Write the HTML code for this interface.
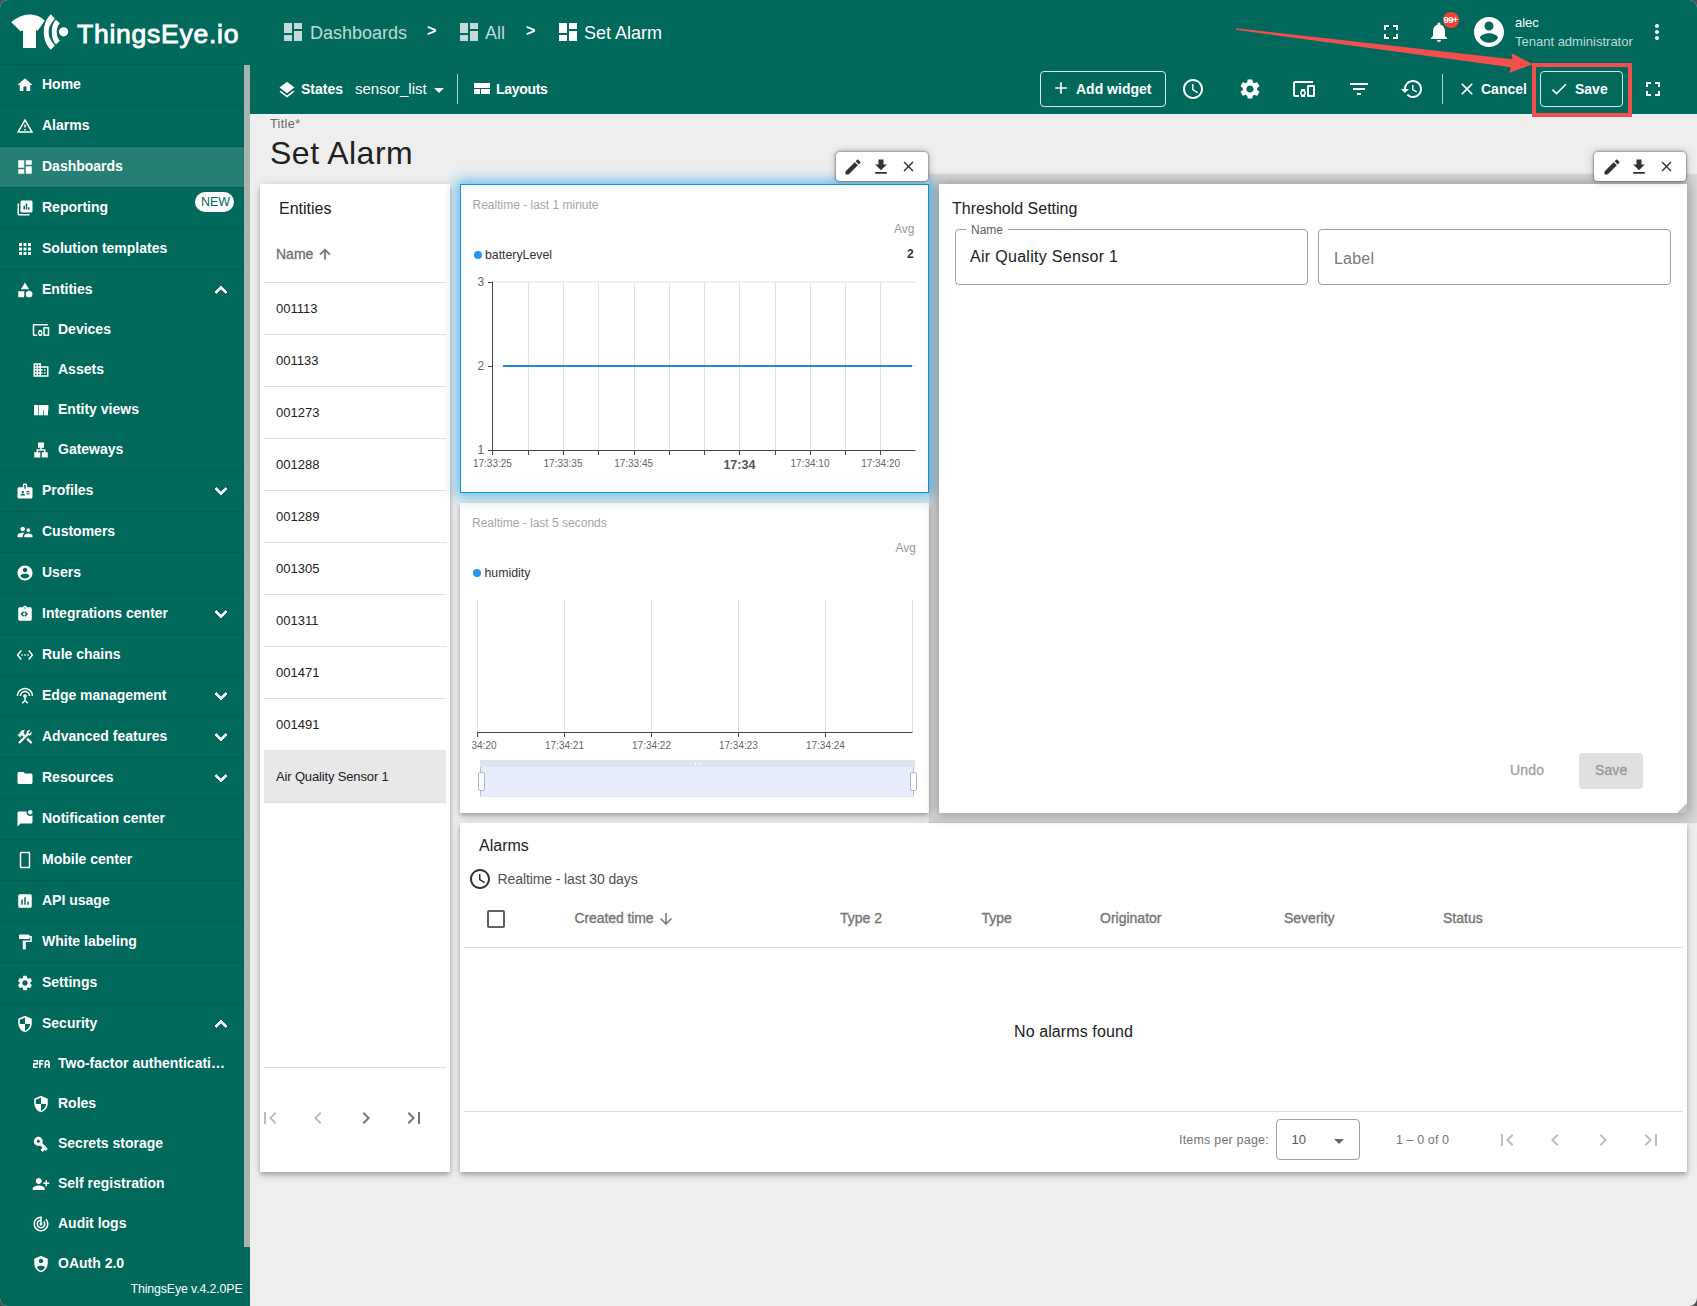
<!DOCTYPE html>
<html><head><meta charset="utf-8">
<style>
*{box-sizing:border-box;margin:0;padding:0}
html,body{width:1697px;height:1306px;overflow:hidden;background:#4d5055;font-family:"Liberation Sans",sans-serif}
#app{position:absolute;left:0;top:0;width:1697px;height:1306px;border-radius:8px;overflow:hidden;background:#eeeeee}
.abs{position:absolute}
.t{white-space:nowrap}

</style></head><body>
<div id="app">
<div class="abs" style="left:0;top:0;width:1697px;height:114px;background:#00695c"></div><div class="abs" style="left:0;top:64px;width:244px;height:1242px;background:#00695c"></div><div class="abs" style="left:244px;top:64px;width:6px;height:1242px;background:#00695c"></div><div class="abs" style="left:244px;top:65px;width:6px;height:1182px;background:#a6b5b2"></div><svg class="abs" style="left:0;top:0" width="80" height="64" viewBox="0 0 80 64">
<path fill="#fff" d="M11.2 22.2 C18 16 26 14.5 29.5 14.5 C34 14.5 40 16 44.8 20.5 L37.8 30.8 L36 30 L36 48 L23 48 L23 30.5 L20.5 31.2 Z"/>
<path fill="#fff" d="M50.8 14.3 L54.9 18.7 C50 24 48.7 28 48.7 32 C48.7 36 50 40 54.9 45.5 L50.8 49.8 C45 44 43.8 37 43.8 32 C43.8 27 45 20 50.8 14.3 Z"/>
<path fill="#fff" d="M56 19.8 L59.8 23.3 C57.5 26 56.7 29 56.7 32 C56.7 35 57.5 38 59.8 40.8 L56 44.5 C52.7 41 51.8 36 51.8 32 C51.8 28 52.7 23 56 19.8 Z"/>
<circle cx="63.6" cy="31.8" r="4.6" fill="#fff"/>
</svg><div class="abs t" style="left:77px;top:20.57px;font-size:26.5px;line-height:26.5px;color:#fff;font-weight:normal;letter-spacing:0.75px;-webkit-text-stroke:0.9px #fff">ThingsEye.io</div><svg class="abs" style="left:281px;top:20px;" width="24" height="24" viewBox="0 0 24 24"><path fill="rgba(255,255,255,0.76)" d="M3 13h8V3H3v10zm0 8h8v-6H3v6zm10 0h8V11h-8v10zm0-18v6h8V3h-8z"/></svg><div class="abs t" style="left:310px;top:23.76px;font-size:18px;line-height:18px;color:rgba(255,255,255,0.76);font-weight:normal;">Dashboards</div><div class="abs t" style="left:427px;top:23.46px;font-size:16px;line-height:16px;color:#fff;font-weight:bold;">&gt;</div><svg class="abs" style="left:457px;top:20px;" width="24" height="24" viewBox="0 0 24 24"><path fill="rgba(255,255,255,0.76)" d="M3 13h8V3H3v10zm0 8h8v-6H3v6zm10 0h8V11h-8v10zm0-18v6h8V3h-8z"/></svg><div class="abs t" style="left:485px;top:23.76px;font-size:18px;line-height:18px;color:rgba(255,255,255,0.76);font-weight:normal;">All</div><div class="abs t" style="left:526px;top:23.46px;font-size:16px;line-height:16px;color:#fff;font-weight:bold;">&gt;</div><svg class="abs" style="left:556px;top:20px;" width="24" height="24" viewBox="0 0 24 24"><path fill="#fff" d="M3 13h8V3H3v10zm0 8h8v-6H3v6zm10 0h8V11h-8v10zm0-18v6h8V3h-8z"/></svg><div class="abs t" style="left:584px;top:23.76px;font-size:18px;line-height:18px;color:#fff;font-weight:normal;">Set Alarm</div><svg class="abs" style="left:1379px;top:20px;" width="24" height="24" viewBox="0 0 24 24"><path fill="#fff" d="M7 14H5v5h5v-2H7v-3zm-2-4h2V7h3V5H5v5zm12 7h-3v2h5v-5h-2v3zM14 5v2h3v3h2V5h-5z"/></svg><svg class="abs" style="left:1427px;top:20px;" width="24" height="24" viewBox="0 0 24 24"><path fill="#fff" d="M12 22c1.1 0 2-.9 2-2h-4c0 1.1.89 2 2 2zm6-6v-5c0-3.07-1.64-5.64-4.5-6.32V4c0-.83-.67-1.5-1.5-1.5s-1.5.67-1.5 1.5v.68C7.63 5.36 6 7.92 6 11v5l-2 2v1h16v-1l-2-2z"/></svg><div class="abs" style="left:1443px;top:12px;width:16px;height:16px;border-radius:50%;background:#f44336"></div><div class="abs t" style="left:1443.5px;top:15.46px;font-size:9.5px;line-height:9.5px;color:#fff;font-weight:bold;letter-spacing:-0.6px">99+</div><svg class="abs" style="left:1471px;top:14px;" width="36" height="36" viewBox="0 0 24 24"><path fill="#fff" d="M12 2C6.48 2 2 6.48 2 12s4.48 10 10 10 10-4.48 10-10S17.52 2 12 2zm0 3c1.66 0 3 1.34 3 3s-1.34 3-3 3-3-1.34-3-3 1.34-3 3-3zm0 14.2c-2.5 0-4.71-1.28-6-3.22.03-1.99 4-3.08 6-3.08 1.99 0 5.97 1.09 6 3.08-1.29 1.94-3.5 3.22-6 3.22z"/></svg><div class="abs t" style="left:1515px;top:16.20px;font-size:13px;line-height:13px;color:#fff;font-weight:normal;">alec</div><div class="abs t" style="left:1515px;top:35.30px;font-size:13px;line-height:13px;color:rgba(255,255,255,0.76);font-weight:normal;">Tenant administrator</div><svg class="abs" style="left:1645px;top:20px;" width="24" height="24" viewBox="0 0 24 24"><path fill="#fff" d="M12 8c1.1 0 2-.9 2-2s-.9-2-2-2-2 .9-2 2 .9 2 2 2zm0 2c-1.1 0-2 .9-2 2s.9 2 2 2 2-.9 2-2-.9-2-2-2zm0 6c-1.1 0-2 .9-2 2s.9 2 2 2 2-.9 2-2-.9-2-2-2z"/></svg><div class="abs" style="left:0;top:64px;width:244px;height:1px;background:#005d51"></div><svg class="abs" style="left:16px;top:76px;" width="18" height="18" viewBox="0 0 24 24"><path fill="#fff" d="M10 20v-6h4v6h5v-8h3L12 3 2 12h3v8z"/></svg><div class="abs t" style="left:42px;top:77.15px;font-size:14px;line-height:14px;color:#fff;font-weight:bold;">Home</div><div class="abs" style="left:0;top:105px;width:244px;height:1px;background:#005d51"></div><svg class="abs" style="left:16px;top:117px;" width="18" height="18" viewBox="0 0 24 24"><path fill="#fff" d="M12 5.99L19.53 19H4.47L12 5.99M12 2L1 21h22L12 2zm1 14h-2v2h2v-2zm0-6h-2v4h2v-4z"/></svg><div class="abs t" style="left:42px;top:118.15px;font-size:14px;line-height:14px;color:#fff;font-weight:bold;">Alarms</div><div class="abs" style="left:0;top:146px;width:244px;height:1px;background:#005d51"></div><div class="abs" style="left:0;top:147px;width:244px;height:40px;background:rgba(255,255,255,0.15)"></div><svg class="abs" style="left:16px;top:158px;" width="18" height="18" viewBox="0 0 24 24"><path fill="#fff" d="M3 13h8V3H3v10zm0 8h8v-6H3v6zm10 0h8V11h-8v10zm0-18v6h8V3h-8z"/></svg><div class="abs t" style="left:42px;top:159.15px;font-size:14px;line-height:14px;color:#fff;font-weight:bold;">Dashboards</div><div class="abs" style="left:0;top:187px;width:244px;height:1px;background:#005d51"></div><svg class="abs" style="left:16px;top:199px;" width="18" height="18" viewBox="0 0 24 24"><path fill="#fff" d="M4 6H2v14c0 1.1.9 2 2 2h14v-2H4V6zm16-4H8c-1.1 0-2 .9-2 2v12c0 1.1.9 2 2 2h12c1.1 0 2-.9 2-2V4c0-1.1-.9-2-2-2zm-8 12h-2V9h2v5zm3 0h-2V6h2v8zm3 0h-2v-3h2v3z"/></svg><div class="abs t" style="left:42px;top:200.15px;font-size:14px;line-height:14px;color:#fff;font-weight:bold;">Reporting</div><div class="abs" style="left:195px;top:192px;width:39px;height:20px;border-radius:10px;background:#fff"></div><div class="abs" style="left:0;top:228px;width:244px;height:1px;background:#005d51"></div><svg class="abs" style="left:16px;top:240px;" width="18" height="18" viewBox="0 0 24 24"><path fill="#fff" d="M4 8h4V4H4v4zm6 12h4v-4h-4v4zm-6 0h4v-4H4v4zm0-6h4v-4H4v4zm6 0h4v-4h-4v4zm6-10v4h4V4h-4zm-6 4h4V4h-4v4zm6 6h4v-4h-4v4zm0 6h4v-4h-4v4z"/></svg><div class="abs t" style="left:42px;top:241.15px;font-size:14px;line-height:14px;color:#fff;font-weight:bold;">Solution templates</div><div class="abs" style="left:0;top:269px;width:244px;height:1px;background:#005d51"></div><svg class="abs" style="left:16px;top:281px;" width="18" height="18" viewBox="0 0 24 24"><path fill="#fff" d="M12 2l-5.5 9h11L12 2zm5.5 11c-2.49 0-4.5 2.01-4.5 4.5s2.01 4.5 4.5 4.5 4.5-2.01 4.5-4.5-2.01-4.5-4.5-4.5zM3 21.5h8v-8H3v8z"/></svg><div class="abs t" style="left:42px;top:282.15px;font-size:14px;line-height:14px;color:#fff;font-weight:bold;">Entities</div><svg class="abs" style="left:209px;top:278px;" width="24" height="24" viewBox="0 0 24 24"><path stroke="#fff" stroke-width="0.9" fill="#fff" d="M12 8l-6 6 1.41 1.41L12 10.83l4.59 4.58L18 14z"/></svg><svg class="abs" style="left:32px;top:321px;" width="18" height="18" viewBox="0 0 24 24"><path fill="#fff" d="M3 6h18V4H3c-1.1 0-2 .9-2 2v12c0 1.1.9 2 2 2h4v-2H3V6zm10 6H9v1.78c-.61.55-1 1.33-1 2.22s.39 1.67 1 2.22V20h4v-1.78c.61-.55 1-1.34 1-2.22s-.39-1.67-1-2.22V12zm-2 5.5c-.83 0-1.5-.67-1.5-1.5s.67-1.5 1.5-1.5 1.5.67 1.5 1.5-.67 1.5-1.5 1.5zM22 8h-6c-.5 0-1 .5-1 1v10c0 .5.5 1 1 1h6c.5 0 1-.5 1-1V9c0-.5-.5-1-1-1zm-1 10h-4v-8h4v8z"/></svg><div class="abs t" style="left:58px;top:322.15px;font-size:14px;line-height:14px;color:#fff;font-weight:bold;">Devices</div><svg class="abs" style="left:32px;top:361px;" width="18" height="18" viewBox="0 0 24 24"><path fill="#fff" d="M12 7V3H2v18h20V7H12zM6 19H4v-2h2v2zm0-4H4v-2h2v2zm0-4H4V9h2v2zm0-4H4V5h2v2zm4 12H8v-2h2v2zm0-4H8v-2h2v2zm0-4H8V9h2v2zm0-4H8V5h2v2zm10 12h-8v-2h2v-2h-2v-2h2v-2h-2V9h8v10zm-2-8h-2v2h2v-2zm0 4h-2v2h2v-2z"/></svg><div class="abs t" style="left:58px;top:362.15px;font-size:14px;line-height:14px;color:#fff;font-weight:bold;">Assets</div><svg class="abs" style="left:34px;top:405px" width="15" height="11" viewBox="0 0 15 11"><g fill="#fff"><rect x="0" y="0" width="4.2" height="10.3"/><rect x="4.8" y="0" width="9.6" height="5.3"/><rect x="4.8" y="5" width="4.4" height="5.3"/><rect x="9.8" y="5" width="4.2" height="5.3"/></g></svg><div class="abs t" style="left:58px;top:402.15px;font-size:14px;line-height:14px;color:#fff;font-weight:bold;">Entity views</div><svg class="abs" style="left:32px;top:441px;" width="18" height="18" viewBox="0 0 24 24"><path fill="#fff" d="M13 22h8v-7h-3v-4h-5V9h3V2H8v7h3v2H6v4H3v7h8v-7H8v-2h8v2h-3z"/></svg><div class="abs t" style="left:58px;top:442.15px;font-size:14px;line-height:14px;color:#fff;font-weight:bold;">Gateways</div><div class="abs" style="left:0;top:470px;width:244px;height:1px;background:#005d51"></div><svg class="abs" style="left:16px;top:482px;" width="18" height="18" viewBox="0 0 24 24"><path fill="#fff" d="M20 7h-5V4c0-1.1-.9-2-2-2h-2c-1.1 0-2 .9-2 2v3H4c-1.1 0-2 .9-2 2v11c0 1.1.9 2 2 2h16c1.1 0 2-.9 2-2V9c0-1.1-.9-2-2-2zM9 12c.83 0 1.5.67 1.5 1.5S9.83 15 9 15s-1.5-.67-1.5-1.5S8.17 12 9 12zm3 6H6v-.75c0-1 2-1.5 3-1.5s3 .5 3 1.5V18zm1-9h-2V4h2v5zm5 7.5h-4V15h4v1.5zm0-3h-4V12h4v1.5z"/></svg><div class="abs t" style="left:42px;top:483.15px;font-size:14px;line-height:14px;color:#fff;font-weight:bold;">Profiles</div><svg class="abs" style="left:209px;top:479px;" width="24" height="24" viewBox="0 0 24 24"><path stroke="#fff" stroke-width="0.9" fill="#fff" d="M16.59 8.59L12 13.17 7.41 8.59 6 10l6 6 6-6z"/></svg><div class="abs" style="left:0;top:511px;width:244px;height:1px;background:#005d51"></div><svg class="abs" style="left:16px;top:523px;" width="18" height="18" viewBox="0 0 24 24"><path fill="#fff" d="M16.5 12c1.38 0 2.49-1.12 2.49-2.5S17.88 7 16.5 7C15.12 7 14 8.12 14 9.5s1.12 2.5 2.5 2.5zM9 11c1.66 0 2.99-1.34 2.99-3S10.66 5 9 5C7.34 5 6 6.34 6 8s1.34 3 3 3zm7.5 3c-1.83 0-5.5.92-5.5 2.75V19h11v-2.25c0-1.83-3.67-2.75-5.5-2.75zM9 13c-2.33 0-7 1.17-7 3.5V19h7v-2.25c0-.85.33-2.34 2.37-3.47C10.5 13.1 9.66 13 9 13z"/></svg><div class="abs t" style="left:42px;top:524.15px;font-size:14px;line-height:14px;color:#fff;font-weight:bold;">Customers</div><div class="abs" style="left:0;top:552px;width:244px;height:1px;background:#005d51"></div><svg class="abs" style="left:16px;top:564px;" width="18" height="18" viewBox="0 0 24 24"><path fill="#fff" d="M12 2C6.48 2 2 6.48 2 12s4.48 10 10 10 10-4.48 10-10S17.52 2 12 2zm0 3c1.66 0 3 1.34 3 3s-1.34 3-3 3-3-1.34-3-3 1.34-3 3-3zm0 14.2c-2.5 0-4.71-1.28-6-3.22.03-1.99 4-3.08 6-3.08 1.99 0 5.97 1.09 6 3.08-1.29 1.94-3.5 3.22-6 3.22z"/></svg><div class="abs t" style="left:42px;top:565.15px;font-size:14px;line-height:14px;color:#fff;font-weight:bold;">Users</div><div class="abs" style="left:0;top:593px;width:244px;height:1px;background:#005d51"></div><svg class="abs" style="left:16px;top:605px;" width="18" height="18" viewBox="0 0 24 24"><path fill="#fff" d="M19 3h-4.18C14.4 1.84 13.3 1 12 1c-1.3 0-2.4.84-2.82 2H5c-1.1 0-2 .9-2 2v14c0 1.1.9 2 2 2h14c1.1 0 2-.9 2-2V5c0-1.1-.9-2-2-2zm-7 0c.55 0 1 .45 1 1s-.45 1-1 1-1-.45-1-1 .45-1 1-1zM11 14.17l-1.41 1.42L6 12l3.59-3.59L11 9.83 8.83 12 11 14.17zm1.41 1.42L11 14.17 13.17 12 11 9.83l1.41-1.42L16 12l-3.59 3.59z"/></svg><div class="abs t" style="left:42px;top:606.15px;font-size:14px;line-height:14px;color:#fff;font-weight:bold;">Integrations center</div><svg class="abs" style="left:209px;top:602px;" width="24" height="24" viewBox="0 0 24 24"><path stroke="#fff" stroke-width="0.9" fill="#fff" d="M16.59 8.59L12 13.17 7.41 8.59 6 10l6 6 6-6z"/></svg><div class="abs" style="left:0;top:634px;width:244px;height:1px;background:#005d51"></div><svg class="abs" style="left:16px;top:646px;" width="18" height="18" viewBox="0 0 24 24"><path fill="#fff" d="M7.77 6.76L6.23 5.48.82 12l5.41 6.52 1.54-1.28L3.42 12l4.35-5.24zM7 13h2v-2H7v2zm10-2h-2v2h2v-2zm-6 2h2v-2h-2v2zm6.77-7.52l-1.54 1.28L20.58 12l-4.35 5.24 1.54 1.28L23.18 12l-5.41-6.52z"/></svg><div class="abs t" style="left:42px;top:647.15px;font-size:14px;line-height:14px;color:#fff;font-weight:bold;">Rule chains</div><div class="abs" style="left:0;top:675px;width:244px;height:1px;background:#005d51"></div><svg class="abs" style="left:16px;top:687px;" width="18" height="18" viewBox="0 0 24 24"><path fill="#fff" d="M12 5c-3.87 0-7 3.13-7 7h2c0-2.76 2.24-5 5-5s5 2.24 5 5h2c0-3.87-3.13-7-7-7zm1 9.29c.88-.39 1.5-1.26 1.5-2.29 0-1.38-1.12-2.5-2.5-2.5S9.5 10.62 9.5 12c0 1.02.62 1.9 1.5 2.29v3.3L7.59 21 9 22.41l3-3 3 3L16.41 21 13 17.59v-3.3zM12 1C5.93 1 1 5.93 1 12h2c0-4.97 4.03-9 9-9s9 4.03 9 9h2c0-6.07-4.93-11-11-11z"/></svg><div class="abs t" style="left:42px;top:688.15px;font-size:14px;line-height:14px;color:#fff;font-weight:bold;">Edge management</div><svg class="abs" style="left:209px;top:684px;" width="24" height="24" viewBox="0 0 24 24"><path stroke="#fff" stroke-width="0.9" fill="#fff" d="M16.59 8.59L12 13.17 7.41 8.59 6 10l6 6 6-6z"/></svg><div class="abs" style="left:0;top:716px;width:244px;height:1px;background:#005d51"></div><svg class="abs" style="left:16px;top:728px;" width="18" height="18" viewBox="0 0 24 24"><path fill="#fff" d="M13.78 15.3l6 6 2.11-2.16-6-6zM17.5 10c1.93 0 3.5-1.57 3.5-3.5 0-.58-.16-1.12-.41-1.6l-2.7 2.7-1.49-1.49 2.7-2.7c-.48-.25-1.02-.41-1.6-.41C15.57 3 14 4.57 14 6.5c0 .41.08.8.21 1.16l-1.85 1.85-1.78-1.78.71-.71-1.41-1.41L12 3.49c-1.17-1.17-3.07-1.17-4.24 0L4.22 7.03l1.41 1.41H2.81l-.71.71 3.54 3.54.71-.71V9.15l1.41 1.41.71-.71 1.78 1.78-7.41 7.41 2.12 2.12L16.34 9.79c.36.13.75.21 1.16.21z"/></svg><div class="abs t" style="left:42px;top:729.15px;font-size:14px;line-height:14px;color:#fff;font-weight:bold;">Advanced features</div><svg class="abs" style="left:209px;top:725px;" width="24" height="24" viewBox="0 0 24 24"><path stroke="#fff" stroke-width="0.9" fill="#fff" d="M16.59 8.59L12 13.17 7.41 8.59 6 10l6 6 6-6z"/></svg><div class="abs" style="left:0;top:757px;width:244px;height:1px;background:#005d51"></div><svg class="abs" style="left:16px;top:769px;" width="18" height="18" viewBox="0 0 24 24"><path fill="#fff" d="M10 4H4c-1.1 0-1.99.9-1.99 2L2 18c0 1.1.9 2 2 2h16c1.1 0 2-.9 2-2V8c0-1.1-.9-2-2-2h-8l-2-2z"/></svg><div class="abs t" style="left:42px;top:770.15px;font-size:14px;line-height:14px;color:#fff;font-weight:bold;">Resources</div><svg class="abs" style="left:209px;top:766px;" width="24" height="24" viewBox="0 0 24 24"><path stroke="#fff" stroke-width="0.9" fill="#fff" d="M16.59 8.59L12 13.17 7.41 8.59 6 10l6 6 6-6z"/></svg><div class="abs" style="left:0;top:798px;width:244px;height:1px;background:#005d51"></div><svg class="abs" style="left:16px;top:810px;" width="18" height="18" viewBox="0 0 24 24"><path fill="#fff" d="M22 6.98V16c0 1.1-.9 2-2 2H6l-4 4V4c0-1.1.9-2 2-2h10.1c-.06.32-.1.66-.1 1 0 2.76 2.24 5 5 5 1.13 0 2.16-.39 3-1.02zM16 3c0 1.66 1.34 3 3 3s3-1.34 3-3-1.34-3-3-3-3 1.34-3 3z"/></svg><div class="abs t" style="left:42px;top:811.15px;font-size:14px;line-height:14px;color:#fff;font-weight:bold;">Notification center</div><div class="abs" style="left:0;top:839px;width:244px;height:1px;background:#005d51"></div><svg class="abs" style="left:16px;top:851px;" width="18" height="18" viewBox="0 0 24 24"><path fill="#fff" d="M17 1.01L7 1c-1.1 0-2 .9-2 2v18c0 1.1.9 2 2 2h10c1.1 0 2-.9 2-2V3c0-1.1-.9-1.99-2-1.99zM17 21H7V3h10v18z"/></svg><div class="abs t" style="left:42px;top:852.15px;font-size:14px;line-height:14px;color:#fff;font-weight:bold;">Mobile center</div><div class="abs" style="left:0;top:880px;width:244px;height:1px;background:#005d51"></div><svg class="abs" style="left:16px;top:892px;" width="18" height="18" viewBox="0 0 24 24"><path fill="#fff" d="M19 3H5c-1.1 0-2 .9-2 2v14c0 1.1.9 2 2 2h14c1.1 0 2-.9 2-2V5c0-1.1-.9-2-2-2zM9 17H7v-7h2v7zm4 0h-2V7h2v10zm4 0h-2v-4h2v4z"/></svg><div class="abs t" style="left:42px;top:893.15px;font-size:14px;line-height:14px;color:#fff;font-weight:bold;">API usage</div><div class="abs" style="left:0;top:921px;width:244px;height:1px;background:#005d51"></div><svg class="abs" style="left:16px;top:933px;" width="18" height="18" viewBox="0 0 24 24"><path fill="#fff" d="M18 4V3c0-.55-.45-1-1-1H5c-.55 0-1 .45-1 1v4c0 .55.45 1 1 1h12c.55 0 1-.45 1-1V6h1v4H9v11c0 .55.45 1 1 1h2c.55 0 1-.45 1-1v-9h8V4h-3z"/></svg><div class="abs t" style="left:42px;top:934.15px;font-size:14px;line-height:14px;color:#fff;font-weight:bold;">White labeling</div><div class="abs" style="left:0;top:962px;width:244px;height:1px;background:#005d51"></div><svg class="abs" style="left:16px;top:974px;" width="18" height="18" viewBox="0 0 24 24"><path fill="#fff" d="M19.14 12.94c.04-.3.06-.61.06-.94 0-.32-.02-.64-.07-.94l2.03-1.58c.18-.14.23-.41.12-.61l-1.92-3.32c-.12-.22-.37-.29-.59-.22l-2.39.96c-.5-.38-1.03-.7-1.62-.94l-.36-2.54c-.04-.24-.24-.41-.48-.41h-3.84c-.24 0-.43.17-.47.41l-.36 2.54c-.59.24-1.13.57-1.62.94l-2.39-.96c-.22-.08-.47 0-.59.22L2.74 8.87c-.12.21-.08.47.12.61l2.03 1.58c-.05.3-.09.63-.09.94s.02.64.07.94l-2.03 1.58c-.18.14-.23.41-.12.61l1.92 3.32c.12.22.37.29.59.22l2.39-.96c.5.38 1.03.7 1.62.94l.36 2.54c.05.24.24.41.48.41h3.84c.24 0 .44-.17.47-.41l.36-2.54c.59-.24 1.13-.56 1.62-.94l2.39.96c.22.08.47 0 .59-.22l1.92-3.32c.12-.22.07-.47-.12-.61l-2.01-1.58zM12 15.6c-1.98 0-3.6-1.62-3.6-3.6s1.62-3.6 3.6-3.6 3.6 1.62 3.6 3.6-1.62 3.6-3.6 3.6z"/></svg><div class="abs t" style="left:42px;top:975.15px;font-size:14px;line-height:14px;color:#fff;font-weight:bold;">Settings</div><div class="abs" style="left:0;top:1003px;width:244px;height:1px;background:#005d51"></div><svg class="abs" style="left:16px;top:1015px;" width="18" height="18" viewBox="0 0 24 24"><path fill="#fff" d="M12 1L3 5v6c0 5.55 3.84 10.74 9 12 5.16-1.26 9-6.45 9-12V5l-9-4zm0 10.99h7c-.53 4.12-3.28 7.79-7 8.94V12H5V6.3l7-3.11v8.8z"/></svg><div class="abs t" style="left:42px;top:1016.15px;font-size:14px;line-height:14px;color:#fff;font-weight:bold;">Security</div><svg class="abs" style="left:209px;top:1012px;" width="24" height="24" viewBox="0 0 24 24"><path stroke="#fff" stroke-width="0.9" fill="#fff" d="M12 8l-6 6 1.41 1.41L12 10.83l4.59 4.58L18 14z"/></svg><svg class="abs" style="left:32px;top:1059px" width="18" height="10" viewBox="0 0 18 10"><g fill="none" stroke="#fff" stroke-width="1.6" stroke-linejoin="round"><polyline points="1.5,1.8 5.4,1.8 5.4,4.9 1.7,4.9 1.7,8.2 5.6,8.2"/><polyline points="7.9,9 7.9,1.8 11.6,1.8"/><line x1="7.9" y1="4.9" x2="11" y2="4.9"/><polyline points="13.3,9 13.3,3.2 14.5,1.8 15.9,1.8 17,3.2 17,9"/><line x1="13.3" y1="5.6" x2="17" y2="5.6"/></g></svg><div class="abs t" style="left:58px;top:1056.15px;font-size:14px;line-height:14px;color:#fff;font-weight:bold;">Two-factor authenticati…</div><svg class="abs" style="left:32px;top:1095px;" width="18" height="18" viewBox="0 0 24 24"><path fill="#fff" d="M12 1L3 5v6c0 5.55 3.84 10.74 9 12 5.16-1.26 9-6.45 9-12V5l-9-4zm0 10.99h7c-.53 4.12-3.28 7.79-7 8.94V12H5V6.3l7-3.11v8.8z"/></svg><div class="abs t" style="left:58px;top:1096.15px;font-size:14px;line-height:14px;color:#fff;font-weight:bold;">Roles</div><svg class="abs" style="left:32px;top:1135px;" width="18" height="18" viewBox="0 0 24 24"><path fill="#fff" d="M12.65 10C11.83 7.67 9.61 6 7 6c-3.31 0-6 2.69-6 6s2.69 6 6 6c2.61 0 4.83-1.67 5.65-4H17v4h4v-4h2v-4H12.65zM7 14c-1.1 0-2-.9-2-2s.9-2 2-2 2 .9 2 2-.9 2-2 2z" transform="rotate(45 12 12)"/></svg><div class="abs t" style="left:58px;top:1136.15px;font-size:14px;line-height:14px;color:#fff;font-weight:bold;">Secrets storage</div><svg class="abs" style="left:32px;top:1175px;" width="18" height="18" viewBox="0 0 24 24"><path fill="#fff" d="M15 12c2.21 0 4-1.79 4-4s-1.79-4-4-4-4 1.79-4 4 1.79 4 4 4zm-9-2V7H4v3H1v2h3v3h2v-3h3v-2H6zm9 4c-2.67 0-8 1.34-8 4v2h16v-2c0-2.66-5.33-4-8-4z" transform="translate(24 0) scale(-1 1)"/></svg><div class="abs t" style="left:58px;top:1176.15px;font-size:14px;line-height:14px;color:#fff;font-weight:bold;">Self registration</div><svg class="abs" style="left:32px;top:1215px;" width="18" height="18" viewBox="0 0 24 24"><path fill="#fff" d="M19.07 4.93l-1.41 1.41C19.1 7.79 20 9.79 20 12c0 4.42-3.58 8-8 8s-8-3.58-8-8c0-4.08 3.05-7.44 7-7.93v2.02C8.16 6.57 6 9.03 6 12c0 3.31 2.69 6 6 6s6-2.69 6-6c0-1.66-.67-3.16-1.76-4.24l-1.41 1.41C15.55 9.9 16 10.9 16 12c0 2.21-1.79 4-4 4s-4-1.79-4-4c0-1.86 1.28-3.41 3-3.86v2.14c-.6.35-1 .98-1 1.72 0 1.1.9 2 2 2s2-.9 2-2c0-.74-.4-1.38-1-1.72V2h-1C6.48 2 2 6.48 2 12s4.48 10 10 10 10-4.48 10-10c0-2.76-1.12-5.26-2.93-7.07z"/></svg><div class="abs t" style="left:58px;top:1216.15px;font-size:14px;line-height:14px;color:#fff;font-weight:bold;">Audit logs</div><svg class="abs" style="left:32px;top:1255px;" width="18" height="18" viewBox="0 0 24 24"><path fill="#fff" d="M12 1L3 5v6c0 5.55 3.84 10.74 9 12 5.16-1.26 9-6.45 9-12V5l-9-4zm0 3.9c1.66 0 3 1.34 3 3s-1.34 3-3 3-3-1.34-3-3 1.34-3 3-3zm0 16c-2.3-.7-4.2-2.4-5.3-4.6 1.3-1.3 3.3-1.9 5.3-1.9s4 .6 5.3 1.9c-1.1 2.2-3 3.9-5.3 4.6z"/></svg><div class="abs t" style="left:58px;top:1256.15px;font-size:14px;line-height:14px;color:#fff;font-weight:bold;">OAuth 2.0</div><div class="abs t" style="left:201px;top:196.42px;font-size:12.5px;line-height:12.5px;color:#00695c;font-weight:normal;letter-spacing:0px">NEW</div><div class="abs t" style="left:130.5px;top:1283.09px;font-size:12.3px;line-height:12.3px;color:#fff;font-weight:normal;letter-spacing:-0.1px">ThingsEye v.4.2.0PE</div><svg class="abs" style="left:276.5px;top:80px;" width="20" height="20" viewBox="0 0 24 24"><path fill="#fff" d="M11.99 18.54l-7.37-5.73L3 14.07l9 7 9-7-1.63-1.27-7.38 5.74zM12 16l7.36-5.73L21 9l-9-7-9 7 1.63 1.27L12 16z"/></svg><div class="abs t" style="left:301px;top:82.15px;font-size:14px;line-height:14px;color:#fff;font-weight:bold;">States</div><div class="abs t" style="left:355px;top:81.30px;font-size:15px;line-height:15px;color:#fff;font-weight:normal;">sensor_list</div><svg class="abs" style="left:427px;top:78px;" width="24" height="24" viewBox="0 0 24 24"><path fill="#fff" d="M7 10l5 5 5-5z"/></svg><div class="abs" style="left:457px;top:74px;width:1px;height:30px;background:rgba(255,255,255,0.7)"></div><svg class="abs" style="left:474px;top:83px" width="16" height="11" viewBox="0 0 16 11"><rect x="0" y="0" width="16" height="5" fill="#fff"/><rect x="0" y="6" width="6" height="5" fill="#fff"/><rect x="7" y="6" width="9" height="5" fill="#fff"/></svg><div class="abs t" style="left:496px;top:82.15px;font-size:14px;line-height:14px;color:#fff;font-weight:bold;letter-spacing:-0.3px">Layouts</div><div class="abs" style="left:1040px;top:71px;width:126px;height:36px;border:1px solid rgba(255,255,255,0.85);border-radius:4px"></div><svg class="abs" style="left:1051px;top:78px;" width="20" height="20" viewBox="0 0 24 24"><path fill="#fff" d="M19 13h-6v6h-2v-6H5v-2h6V5h2v6h6v2z"/></svg><div class="abs t" style="left:1076px;top:82.15px;font-size:14px;line-height:14px;color:#fff;font-weight:bold;">Add widget</div><svg class="abs" style="left:1180.5px;top:77px;" width="24" height="24" viewBox="0 0 24 24"><path fill="#fff" d="M11.99 2C6.47 2 2 6.48 2 12s4.47 10 9.99 10C17.52 22 22 17.52 22 12S17.52 2 11.99 2zM12 20c-4.42 0-8-3.58-8-8s3.58-8 8-8 8 3.58 8 8-3.58 8-8 8zm.5-13H11v6l5.25 3.15.75-1.23-4.5-2.67z"/></svg><svg class="abs" style="left:1238px;top:77px;" width="24" height="24" viewBox="0 0 24 24"><path fill="#fff" d="M19.14 12.94c.04-.3.06-.61.06-.94 0-.32-.02-.64-.07-.94l2.03-1.58c.18-.14.23-.41.12-.61l-1.92-3.32c-.12-.22-.37-.29-.59-.22l-2.39.96c-.5-.38-1.03-.7-1.62-.94l-.36-2.54c-.04-.24-.24-.41-.48-.41h-3.84c-.24 0-.43.17-.47.41l-.36 2.54c-.59.24-1.13.57-1.62.94l-2.39-.96c-.22-.08-.47 0-.59.22L2.74 8.87c-.12.21-.08.47.12.61l2.03 1.58c-.05.3-.09.63-.09.94s.02.64.07.94l-2.03 1.58c-.18.14-.23.41-.12.61l1.92 3.32c.12.22.37.29.59.22l2.39-.96c.5.38 1.03.7 1.62.94l.36 2.54c.05.24.24.41.48.41h3.84c.24 0 .44-.17.47-.41l.36-2.54c.59-.24 1.13-.56 1.62-.94l2.39.96c.22.08.47 0 .59-.22l1.92-3.32c.12-.22.07-.47-.12-.61l-2.01-1.58zM12 15.6c-1.98 0-3.6-1.62-3.6-3.6s1.62-3.6 3.6-3.6 3.6 1.62 3.6 3.6-1.62 3.6-3.6 3.6z"/></svg><svg class="abs" style="left:1292px;top:77px;" width="24" height="24" viewBox="0 0 24 24"><path fill="#fff" d="M3 6h18V4H3c-1.1 0-2 .9-2 2v12c0 1.1.9 2 2 2h4v-2H3V6zm10 6H9v1.78c-.61.55-1 1.33-1 2.22s.39 1.67 1 2.22V20h4v-1.78c.61-.55 1-1.34 1-2.22s-.39-1.67-1-2.22V12zm-2 5.5c-.83 0-1.5-.67-1.5-1.5s.67-1.5 1.5-1.5 1.5.67 1.5 1.5-.67 1.5-1.5 1.5zM22 8h-6c-.5 0-1 .5-1 1v10c0 .5.5 1 1 1h6c.5 0 1-.5 1-1V9c0-.5-.5-1-1-1zm-1 10h-4v-8h4v8z"/></svg><svg class="abs" style="left:1346.5px;top:77px;" width="24" height="24" viewBox="0 0 24 24"><path fill="#fff" d="M10 18h4v-2h-4v2zM3 6v2h18V6H3zm3 7h12v-2H6v2z"/></svg><svg class="abs" style="left:1400px;top:77px;" width="24" height="24" viewBox="0 0 24 24"><path fill="#fff" d="M13 3c-4.97 0-9 4.03-9 9H1l3.89 3.89.07.14L9 12H6c0-3.87 3.13-7 7-7s7 3.13 7 7-3.13 7-7 7c-1.93 0-3.68-.79-4.94-2.06l-1.42 1.42C8.27 19.99 10.51 21 13 21c4.97 0 9-4.03 9-9s-4.03-9-9-9zm-1 5v5l4.28 2.54.72-1.21-3.5-2.08V8H12z"/></svg><div class="abs" style="left:1442px;top:74px;width:1px;height:30px;background:rgba(255,255,255,0.7)"></div><svg class="abs" style="left:1456.5px;top:79px;" width="20" height="20" viewBox="0 0 24 24"><path fill="#fff" d="M19 6.41L17.59 5 12 10.59 6.41 5 5 6.41 10.59 12 5 17.59 6.41 19 12 13.41 17.59 19 19 17.59 13.41 12z"/></svg><div class="abs t" style="left:1481px;top:82.15px;font-size:14px;line-height:14px;color:#fff;font-weight:bold;">Cancel</div><div class="abs" style="left:1540px;top:71px;width:83px;height:36px;border:1px solid rgba(255,255,255,0.85);border-radius:4px"></div><svg class="abs" style="left:1549px;top:79px;" width="20" height="20" viewBox="0 0 24 24"><path fill="#fff" d="M9 16.17L4.83 12l-1.42 1.41L9 19 21 7l-1.41-1.41z"/></svg><div class="abs t" style="left:1575px;top:82.15px;font-size:14px;line-height:14px;color:#fff;font-weight:bold;">Save</div><svg class="abs" style="left:1641px;top:77px;" width="24" height="24" viewBox="0 0 24 24"><path fill="#fff" d="M7 14H5v5h5v-2H7v-3zm-2-4h2V7h3V5H5v5zm12 7h-3v2h5v-5h-2v3zM14 5v2h3v3h2V5h-5z"/></svg><div class="abs t" style="left:270px;top:118.32px;font-size:12.5px;line-height:12.5px;color:#666;font-weight:normal;letter-spacing:0.4px">Title*</div><div class="abs t" style="left:270px;top:137.11px;font-size:32px;line-height:32px;color:#212121;font-weight:normal;letter-spacing:0.5px">Set Alarm</div><div class="abs" style="left:260px;top:184px;width:190px;height:988px;background:#fff;box-shadow:0 2px 4px -1px rgba(0,0,0,.2),0 4px 5px 0 rgba(0,0,0,.14),0 1px 10px 0 rgba(0,0,0,.12)"></div><div class="abs t" style="left:279px;top:200.96px;font-size:16px;line-height:16px;color:#212121;font-weight:normal;">Entities</div><div class="abs t" style="left:276px;top:247.45px;font-size:14px;line-height:14px;color:#6e6e6e;font-weight:normal;-webkit-text-stroke:0.3px #6e6e6e">Name</div><svg class="abs" style="left:317.3px;top:246.2px;" width="16" height="16" viewBox="0 0 24 24"><path stroke="#6e6e6e" stroke-width="0.8" fill="#6e6e6e" d="M4 12l1.41 1.41L11 7.83V20h2V7.83l5.58 5.59L20 12l-8-8-8 8z"/></svg><div class="abs" style="left:264px;top:282px;width:182px;height:1px;background:#dedede"></div><div class="abs t" style="left:276px;top:302.00px;font-size:13px;line-height:13px;color:#212121;font-weight:normal;">001113</div><div class="abs" style="left:264px;top:334px;width:182px;height:1px;background:#dedede"></div><div class="abs t" style="left:276px;top:354.00px;font-size:13px;line-height:13px;color:#212121;font-weight:normal;">001133</div><div class="abs" style="left:264px;top:386px;width:182px;height:1px;background:#dedede"></div><div class="abs t" style="left:276px;top:406.00px;font-size:13px;line-height:13px;color:#212121;font-weight:normal;">001273</div><div class="abs" style="left:264px;top:438px;width:182px;height:1px;background:#dedede"></div><div class="abs t" style="left:276px;top:458.00px;font-size:13px;line-height:13px;color:#212121;font-weight:normal;">001288</div><div class="abs" style="left:264px;top:490px;width:182px;height:1px;background:#dedede"></div><div class="abs t" style="left:276px;top:510.00px;font-size:13px;line-height:13px;color:#212121;font-weight:normal;">001289</div><div class="abs" style="left:264px;top:542px;width:182px;height:1px;background:#dedede"></div><div class="abs t" style="left:276px;top:562.00px;font-size:13px;line-height:13px;color:#212121;font-weight:normal;">001305</div><div class="abs" style="left:264px;top:594px;width:182px;height:1px;background:#dedede"></div><div class="abs t" style="left:276px;top:614.00px;font-size:13px;line-height:13px;color:#212121;font-weight:normal;">001311</div><div class="abs" style="left:264px;top:646px;width:182px;height:1px;background:#dedede"></div><div class="abs t" style="left:276px;top:666.00px;font-size:13px;line-height:13px;color:#212121;font-weight:normal;">001471</div><div class="abs" style="left:264px;top:698px;width:182px;height:1px;background:#dedede"></div><div class="abs t" style="left:276px;top:718.00px;font-size:13px;line-height:13px;color:#212121;font-weight:normal;">001491</div><div class="abs" style="left:264px;top:750px;width:182px;height:1px;background:#dedede"></div><div class="abs" style="left:264px;top:750px;width:182px;height:53px;background:#e8e8e8"></div><div class="abs t" style="left:276px;top:770.00px;font-size:13px;line-height:13px;color:#212121;font-weight:normal;letter-spacing:-0.15px">Air Quality Sensor 1</div><div class="abs" style="left:264px;top:802px;width:182px;height:1px;background:#dedede"></div><div class="abs" style="left:264px;top:1067px;width:182px;height:1px;background:#dedede"></div><svg class="abs" style="left:258px;top:1106px;" width="24" height="24" viewBox="0 0 24 24"><path fill="rgba(0,0,0,.26)" d="M18.41 16.59L13.82 12l4.59-4.59L17 6l-6 6 6 6zM6 6h2v12H6z"/></svg><svg class="abs" style="left:306px;top:1106px;" width="24" height="24" viewBox="0 0 24 24"><path fill="rgba(0,0,0,.26)" d="M15.41 7.41L14 6l-6 6 6 6 1.41-1.41L10.83 12z"/></svg><svg class="abs" style="left:354px;top:1106px;" width="24" height="24" viewBox="0 0 24 24"><path fill="rgba(0,0,0,.54)" d="M10 6L8.59 7.41 13.17 12l-4.58 4.59L10 18l6-6z"/></svg><svg class="abs" style="left:402px;top:1106px;" width="24" height="24" viewBox="0 0 24 24"><path fill="rgba(0,0,0,.54)" d="M5.59 7.41L10.18 12l-4.59 4.59L7 18l6-6-6-6zM16 6h2v12h-2z"/></svg><div class="abs" style="left:460px;top:503px;width:469px;height:310px;background:#fff;box-shadow:0 2px 4px -1px rgba(0,0,0,.2),0 4px 5px 0 rgba(0,0,0,.14),0 1px 10px 0 rgba(0,0,0,.12)"></div><div class="abs" style="left:460px;top:823px;width:1227px;height:349px;background:#fff;box-shadow:0 2px 4px -1px rgba(0,0,0,.2),0 4px 5px 0 rgba(0,0,0,.14),0 1px 10px 0 rgba(0,0,0,.12)"></div><div class="abs" style="left:460px;top:184px;width:469px;height:309px;background:#fff;border:1px solid #0a93e0;box-shadow:0 0 12px 4px rgba(20,160,235,.6)"></div><div class="abs" style="left:939px;top:184px;width:748px;height:629px;background:#fff;box-shadow:0 0 1px 10px rgba(0,0,0,.09),0 0 12px 2px rgba(0,0,0,.3)"></div><div class="abs t" style="left:472.5px;top:198.84px;font-size:12px;line-height:12px;color:#a6a6a6;font-weight:normal;">Realtime - last 1 minute</div><div class="abs t" style="left:894px;top:223.34px;font-size:12px;line-height:12px;color:#9a9a9a;font-weight:normal;">Avg</div><div class="abs" style="left:473.5px;top:250.5px;width:8.5px;height:8.5px;border-radius:50%;background:#2196f3"></div><div class="abs t" style="left:485px;top:248.59px;font-size:12.3px;line-height:12.3px;color:#333;font-weight:normal;">batteryLevel</div><div class="abs t" style="left:907px;top:248.34px;font-size:12px;line-height:12px;color:#333;font-weight:bold;">2</div><svg class="abs" style="left:0;top:0" width="1697" height="1306" viewBox="0 0 1697 1306"><line x1="528.5" y1="282" x2="528.5" y2="450" stroke="#e2e2e2" stroke-width="1"/><line x1="563.5" y1="282" x2="563.5" y2="450" stroke="#e2e2e2" stroke-width="1"/><line x1="598.5" y1="282" x2="598.5" y2="450" stroke="#e2e2e2" stroke-width="1"/><line x1="634.5" y1="282" x2="634.5" y2="450" stroke="#e2e2e2" stroke-width="1"/><line x1="669.5" y1="282" x2="669.5" y2="450" stroke="#e2e2e2" stroke-width="1"/><line x1="704.5" y1="282" x2="704.5" y2="450" stroke="#e2e2e2" stroke-width="1"/><line x1="739.5" y1="282" x2="739.5" y2="450" stroke="#e2e2e2" stroke-width="1"/><line x1="775.5" y1="282" x2="775.5" y2="450" stroke="#e2e2e2" stroke-width="1"/><line x1="810.5" y1="282" x2="810.5" y2="450" stroke="#e2e2e2" stroke-width="1"/><line x1="845.5" y1="282" x2="845.5" y2="450" stroke="#e2e2e2" stroke-width="1"/><line x1="880.5" y1="282" x2="880.5" y2="450" stroke="#e2e2e2" stroke-width="1"/><line x1="492.5" y1="282" x2="915.5" y2="282" stroke="#e2e2e2" stroke-width="1"/><line x1="492.5" y1="366" x2="915.5" y2="366" stroke="#e2e2e2" stroke-width="1"/><line x1="492.5" y1="281.5" x2="492.5" y2="450.5" stroke="#444" stroke-width="1"/><line x1="488" y1="450.5" x2="915.5" y2="450.5" stroke="#444" stroke-width="1"/><line x1="488" y1="282.5" x2="492" y2="282.5" stroke="#444" stroke-width="1"/><line x1="488" y1="366.5" x2="492" y2="366.5" stroke="#444" stroke-width="1"/><line x1="492.5" y1="450" x2="492.5" y2="455" stroke="#444" stroke-width="1"/><line x1="528.5" y1="450" x2="528.5" y2="455" stroke="#444" stroke-width="1"/><line x1="563.5" y1="450" x2="563.5" y2="455" stroke="#444" stroke-width="1"/><line x1="598.5" y1="450" x2="598.5" y2="455" stroke="#444" stroke-width="1"/><line x1="634.5" y1="450" x2="634.5" y2="455" stroke="#444" stroke-width="1"/><line x1="669.5" y1="450" x2="669.5" y2="455" stroke="#444" stroke-width="1"/><line x1="704.5" y1="450" x2="704.5" y2="455" stroke="#444" stroke-width="1"/><line x1="739.5" y1="450" x2="739.5" y2="455" stroke="#444" stroke-width="1"/><line x1="775.5" y1="450" x2="775.5" y2="455" stroke="#444" stroke-width="1"/><line x1="810.5" y1="450" x2="810.5" y2="455" stroke="#444" stroke-width="1"/><line x1="845.5" y1="450" x2="845.5" y2="455" stroke="#444" stroke-width="1"/><line x1="880.5" y1="450" x2="880.5" y2="455" stroke="#444" stroke-width="1"/><line x1="503" y1="366" x2="912" y2="366" stroke="#1e88e5" stroke-width="2"/><line x1="477.5" y1="600" x2="477.5" y2="732" stroke="#e0e0e0" stroke-width="1"/><line x1="477.5" y1="732" x2="477.5" y2="737" stroke="#444" stroke-width="1"/><line x1="564.5" y1="600" x2="564.5" y2="732" stroke="#e0e0e0" stroke-width="1"/><line x1="564.5" y1="732" x2="564.5" y2="737" stroke="#444" stroke-width="1"/><line x1="651.5" y1="600" x2="651.5" y2="732" stroke="#e0e0e0" stroke-width="1"/><line x1="651.5" y1="732" x2="651.5" y2="737" stroke="#444" stroke-width="1"/><line x1="738.5" y1="600" x2="738.5" y2="732" stroke="#e0e0e0" stroke-width="1"/><line x1="738.5" y1="732" x2="738.5" y2="737" stroke="#444" stroke-width="1"/><line x1="825.5" y1="600" x2="825.5" y2="732" stroke="#e0e0e0" stroke-width="1"/><line x1="825.5" y1="732" x2="825.5" y2="737" stroke="#444" stroke-width="1"/><line x1="912.5" y1="600" x2="912.5" y2="732" stroke="#e0e0e0" stroke-width="1"/><line x1="477" y1="732.5" x2="912.5" y2="732.5" stroke="#444" stroke-width="1"/></svg><div class="abs t" style="left:477.5px;top:275.84px;font-size:12px;line-height:12px;color:#666;font-weight:normal;">3</div><div class="abs t" style="left:477.5px;top:359.84px;font-size:12px;line-height:12px;color:#666;font-weight:normal;">2</div><div class="abs t" style="left:477.5px;top:443.84px;font-size:12px;line-height:12px;color:#666;font-weight:normal;">1</div><div class="abs t" style="left:462.4px;width:60px;text-align:center;top:458.5px;font-size:10px;line-height:10px;color:#666">17:33:25</div><div class="abs t" style="left:533.0px;width:60px;text-align:center;top:458.5px;font-size:10px;line-height:10px;color:#666">17:33:35</div><div class="abs t" style="left:603.6px;width:60px;text-align:center;top:458.5px;font-size:10px;line-height:10px;color:#666">17:33:45</div><div class="abs t" style="left:780.0px;width:60px;text-align:center;top:458.5px;font-size:10px;line-height:10px;color:#666">17:34:10</div><div class="abs t" style="left:850.6px;width:60px;text-align:center;top:458.5px;font-size:10px;line-height:10px;color:#666">17:34:20</div><div class="abs t" style="left:709.4px;width:60px;text-align:center;top:458.9px;font-size:12.5px;line-height:12.5px;color:#555;font-weight:bold">17:34</div><div class="abs t" style="left:472px;top:516.84px;font-size:12px;line-height:12px;color:#a6a6a6;font-weight:normal;">Realtime - last 5 seconds</div><div class="abs t" style="left:895.5px;top:541.84px;font-size:12px;line-height:12px;color:#9a9a9a;font-weight:normal;">Avg</div><div class="abs" style="left:472.5px;top:569px;width:8px;height:8px;border-radius:50%;background:#2196f3"></div><div class="abs t" style="left:484.5px;top:566.59px;font-size:12.3px;line-height:12.3px;color:#333;font-weight:normal;">humidity</div><div class="abs t" style="left:471.5px;top:740.5px;font-size:10px;line-height:10px;color:#666">34:20</div><div class="abs t" style="left:534.5px;width:60px;text-align:center;top:740.5px;font-size:10px;line-height:10px;color:#666">17:34:21</div><div class="abs t" style="left:621.5px;width:60px;text-align:center;top:740.5px;font-size:10px;line-height:10px;color:#666">17:34:22</div><div class="abs t" style="left:708.4px;width:60px;text-align:center;top:740.5px;font-size:10px;line-height:10px;color:#666">17:34:23</div><div class="abs t" style="left:795.4px;width:60px;text-align:center;top:740.5px;font-size:10px;line-height:10px;color:#666">17:34:24</div><div class="abs" style="left:480px;top:760px;width:435px;height:7px;background:#dde3ef"></div><div class="abs" style="left:480px;top:767px;width:434px;height:30px;background:#e7edfb;border-left:1px solid #b5c1da;border-right:1px solid #b5c1da;border-bottom:1px solid #dfe6f5"></div><div class="abs" style="left:477.5px;top:772px;width:7px;height:19px;background:#fff;border:1px solid #aab6d0;border-radius:2px"></div><div class="abs" style="left:910px;top:772px;width:7px;height:19px;background:#fff;border:1px solid #aab6d0;border-radius:2px"></div><div class="abs" style="left:695px;top:762px;width:5px;height:3px;border-left:1px solid #fff;border-right:1px solid #fff"></div><div class="abs" style="left:835.6px;top:152.4px;width:92.5px;height:29px;background:#fff;border-radius:4px;box-shadow:0 0 2px 1px rgba(0,0,0,.3),0 0 8px rgba(0,0,0,.25)"></div><svg class="abs" style="left:843.4px;top:157.4px;" width="20" height="20" viewBox="0 0 24 24"><path fill="#333" d="M3 17.25V21h3.75L17.81 9.94l-3.75-3.75L3 17.25zM20.71 7.04c.39-.39.39-1.02 0-1.41l-2.34-2.34c-.39-.39-1.02-.39-1.41 0l-1.83 1.83 3.75 3.75 1.83-1.83z"/></svg><svg class="abs" style="left:871.2px;top:156.6px;" width="20" height="20" viewBox="0 0 24 24"><path fill="#333" d="M19 9h-4V3H9v6H5l7 7 7-7zM5 18v2h14v-2H5z"/></svg><svg class="abs" style="left:900.0px;top:157.8px;" width="17" height="17" viewBox="0 0 24 24"><path fill="#333" d="M19 6.41L17.59 5 12 10.59 6.41 5 5 6.41 10.59 12 5 17.59 6.41 19 12 13.41 17.59 19 19 17.59 13.41 12z"/></svg><div class="abs" style="left:1593.8px;top:152.4px;width:92.5px;height:29px;background:#fff;border-radius:4px;box-shadow:0 0 2px 1px rgba(0,0,0,.3),0 0 8px rgba(0,0,0,.25)"></div><svg class="abs" style="left:1601.6px;top:157.4px;" width="20" height="20" viewBox="0 0 24 24"><path fill="#333" d="M3 17.25V21h3.75L17.81 9.94l-3.75-3.75L3 17.25zM20.71 7.04c.39-.39.39-1.02 0-1.41l-2.34-2.34c-.39-.39-1.02-.39-1.41 0l-1.83 1.83 3.75 3.75 1.83-1.83z"/></svg><svg class="abs" style="left:1629.3999999999999px;top:156.6px;" width="20" height="20" viewBox="0 0 24 24"><path fill="#333" d="M19 9h-4V3H9v6H5l7 7 7-7zM5 18v2h14v-2H5z"/></svg><svg class="abs" style="left:1658.2px;top:157.8px;" width="17" height="17" viewBox="0 0 24 24"><path fill="#333" d="M19 6.41L17.59 5 12 10.59 6.41 5 5 6.41 10.59 12 5 17.59 6.41 19 12 13.41 17.59 19 19 17.59 13.41 12z"/></svg><div class="abs t" style="left:952px;top:200.96px;font-size:16px;line-height:16px;color:#212121;font-weight:normal;">Threshold Setting</div><div class="abs" style="left:955px;top:229px;width:353px;height:56px;border:1px solid #9e9e9e;border-radius:4px"></div><div class="abs" style="left:966px;top:225px;width:42px;height:8px;background:#fff"></div><div class="abs t" style="left:971px;top:223.84px;font-size:12px;line-height:12px;color:#616161;font-weight:normal;">Name</div><div class="abs t" style="left:970px;top:248.96px;font-size:16px;line-height:16px;color:#212121;font-weight:normal;letter-spacing:0.3px">Air Quality Sensor 1</div><div class="abs" style="left:1318px;top:229px;width:353px;height:56px;border:1px solid #9e9e9e;border-radius:4px"></div><div class="abs t" style="left:1334px;top:250.76px;font-size:16px;line-height:16px;color:#7a7a7a;font-weight:normal;letter-spacing:0.2px">Label</div><div class="abs t" style="left:1510px;top:763.15px;font-size:14px;line-height:14px;color:#a0a0a0;font-weight:normal;letter-spacing:0.2px;-webkit-text-stroke:0.3px #a0a0a0">Undo</div><div class="abs" style="left:1579px;top:753px;width:64px;height:36px;border-radius:4px;background:#e0e0e0"></div><div class="abs t" style="left:1595px;top:763.15px;font-size:14px;line-height:14px;color:#959595;font-weight:normal;letter-spacing:0.1px;-webkit-text-stroke:0.3px #959595">Save</div><svg class="abs" style="left:1676px;top:802px" width="12" height="12" viewBox="0 0 12 12"><polygon points="11,1 11,11 1,11" fill="#c2c2c2"/></svg><div class="abs t" style="left:479px;top:838.46px;font-size:16px;line-height:16px;color:#212121;font-weight:normal;">Alarms</div><svg class="abs" style="left:468px;top:866.5px;" width="24" height="24" viewBox="0 0 24 24"><path fill="#333" d="M11.99 2C6.47 2 2 6.48 2 12s4.47 10 9.99 10C17.52 22 22 17.52 22 12S17.52 2 11.99 2zM12 20c-4.42 0-8-3.58-8-8s3.58-8 8-8 8 3.58 8 8-3.58 8-8 8zm.5-13H11v6l5.25 3.15.75-1.23-4.5-2.67z"/></svg><div class="abs t" style="left:497.5px;top:871.65px;font-size:14px;line-height:14px;color:#505050;font-weight:normal;letter-spacing:-0.1px">Realtime - last 30 days</div><div class="abs" style="left:487px;top:910px;width:18px;height:18px;border:2px solid #616161;border-radius:2px"></div><div class="abs t" style="left:574.5px;top:911.15px;font-size:14px;line-height:14px;color:#757575;font-weight:normal;letter-spacing:-0.1px;-webkit-text-stroke:0.35px #757575">Created time</div><svg class="abs" style="left:657px;top:910px;" width="18" height="18" viewBox="0 0 24 24"><path fill="#757575" d="M20 12l-1.41-1.41L13 16.17V4h-2v12.17l-5.58-5.59L4 12l8 8 8-8z"/></svg><div class="abs t" style="left:840px;top:911.15px;font-size:14px;line-height:14px;color:#757575;font-weight:normal;-webkit-text-stroke:0.35px #757575">Type 2</div><div class="abs t" style="left:981.5px;top:911.15px;font-size:14px;line-height:14px;color:#757575;font-weight:normal;-webkit-text-stroke:0.35px #757575">Type</div><div class="abs t" style="left:1100px;top:911.15px;font-size:14px;line-height:14px;color:#757575;font-weight:normal;-webkit-text-stroke:0.35px #757575">Originator</div><div class="abs t" style="left:1284px;top:911.15px;font-size:14px;line-height:14px;color:#757575;font-weight:normal;-webkit-text-stroke:0.35px #757575">Severity</div><div class="abs t" style="left:1443px;top:911.15px;font-size:14px;line-height:14px;color:#757575;font-weight:normal;-webkit-text-stroke:0.35px #757575">Status</div><div class="abs" style="left:464px;top:947px;width:1219px;height:1px;background:#dedede"></div><div class="abs t" style="left:1014px;top:1023.76px;font-size:16px;line-height:16px;color:#212121;font-weight:normal;letter-spacing:0.1px">No alarms found</div><div class="abs" style="left:464px;top:1111px;width:1219px;height:1px;background:#dedede"></div><div class="abs t" style="left:1179px;top:1134.42px;font-size:12.5px;line-height:12.5px;color:#757575;font-weight:normal;letter-spacing:0.2px">Items per page:</div><div class="abs" style="left:1276px;top:1119px;width:84px;height:41px;border:1px solid #9e9e9e;border-radius:4px"></div><div class="abs t" style="left:1291.5px;top:1133.00px;font-size:13px;line-height:13px;color:#555;font-weight:normal;">10</div><svg class="abs" style="left:1327px;top:1129px;" width="24" height="24" viewBox="0 0 24 24"><path fill="#666" d="M7 10l5 5 5-5z"/></svg><div class="abs t" style="left:1396px;top:1134.42px;font-size:12.5px;line-height:12.5px;color:#757575;font-weight:normal;letter-spacing:0.1px">1 – 0 of 0</div><svg class="abs" style="left:1495px;top:1128px;" width="24" height="24" viewBox="0 0 24 24"><path fill="rgba(0,0,0,.26)" d="M18.41 16.59L13.82 12l4.59-4.59L17 6l-6 6 6 6zM6 6h2v12H6z"/></svg><svg class="abs" style="left:1543px;top:1128px;" width="24" height="24" viewBox="0 0 24 24"><path fill="rgba(0,0,0,.26)" d="M15.41 7.41L14 6l-6 6 6 6 1.41-1.41L10.83 12z"/></svg><svg class="abs" style="left:1591px;top:1128px;" width="24" height="24" viewBox="0 0 24 24"><path fill="rgba(0,0,0,.26)" d="M10 6L8.59 7.41 13.17 12l-4.58 4.59L10 18l6-6z"/></svg><svg class="abs" style="left:1639px;top:1128px;" width="24" height="24" viewBox="0 0 24 24"><path fill="rgba(0,0,0,.26)" d="M5.59 7.41L10.18 12l-4.59 4.59L7 18l6-6-6-6zM16 6h2v12h-2z"/></svg><div class="abs" style="left:1532px;top:63px;width:100px;height:54px;border:4px solid #f44f4f"></div><svg class="abs" style="left:0;top:0" width="1697" height="130" viewBox="0 0 1697 130"><polygon fill="#f44f4f" points="1236,28.2 1512.5,59.3 1511.4,53 1533,64.3 1509,73 1511,67.3 1236,29.8"/></svg>
</div>
</body></html>
